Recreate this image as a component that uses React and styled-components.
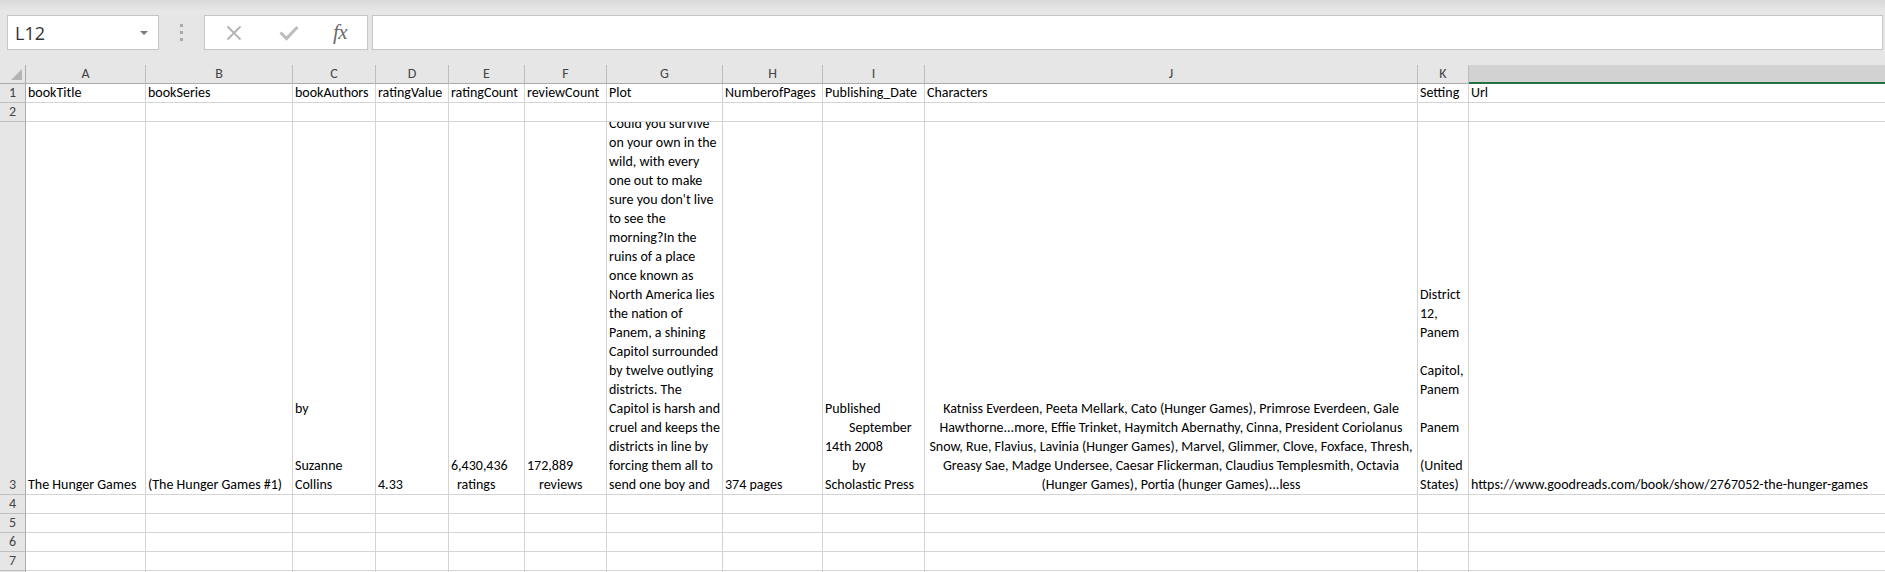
import React from "react";
import styled, { createGlobalStyle } from "styled-components";

const GlobalStyle = createGlobalStyle`
  html, body { margin: 0; padding: 0; background: #e6e6e6; overflow: hidden; }
  * { box-sizing: border-box; }
`;

const CELL_FONT = `Carlito, Calibri, "Liberation Sans", sans-serif`;

const Window = styled.div`
  width: 1885px;
  height: 572px;
  overflow: hidden;
  background: #e6e6e6;
  display: flex;
  flex-direction: column;
`;

const FormulaBar = styled.div`
  height: 65px;
  flex: none;
  display: flex;
  padding: 15px 2px 15px 7px;
  background: linear-gradient(to bottom, #d9d9d9 0px, #e8e8e8 12px, #e6e6e6 15px);
`;

const NameBox = styled.div`
  width: 152px;
  height: 35px;
  background: #fff;
  border: 1px solid #c6c6c6;
  display: flex;
  align-items: center;
  justify-content: space-between;
  padding: 0 10px 0 7px;
  font-family: "Open Sans", "Noto Sans", sans-serif;
  font-size: 18px;
  color: #333;
`;

const Caret = styled.span`
  width: 0;
  height: 0;
  border-left: 4px solid transparent;
  border-right: 4px solid transparent;
  border-top: 4px solid #7b7b7b;
`;

const Grip = styled.div`
  width: 45px;
  display: flex;
  flex-direction: column;
  align-items: center;
  justify-content: center;
  gap: 4px;
`;

const Dot = styled.span`
  width: 3px;
  height: 3px;
  background: #a9a9a9;
`;

const FxBox = styled.div`
  width: 164px;
  height: 35px;
  background: #fff;
  border: 1px solid #c6c6c6;
  display: flex;
  align-items: center;
  padding-left: 20px;
`;

const FxButton = styled.span`
  width: ${(p) => p.$w}px;
  display: flex;
  align-items: center;
  justify-content: center;
`;

const FxLabel = styled.span`
  font-family: "Liberation Serif", "DejaVu Serif", serif;
  font-style: italic;
  font-size: 21px;
  color: #6a6a6a;
  letter-spacing: -0.5px;
  margin-left: -2px;
`;

const FormulaInput = styled.div`
  flex: 1;
  height: 35px;
  margin-left: 4px;
  background: #fff;
  border: 1px solid #c6c6c6;
`;

const Sheet = styled.div`
  display: grid;
  grid-template-columns: ${(p) => p.$cols};
  grid-template-rows: ${(p) => p.$rows};
  background: #fff;
  font-family: ${CELL_FONT};
  font-size: 14px;
  color: #000;
`;

const Corner = styled.div`
  background: #e6e6e6;
  border-right: 1px solid #ababab;
  border-bottom: 1px solid #ababab;
  display: flex;
  align-items: flex-end;
  justify-content: flex-end;
  padding: 0 3px 3px 0;
`;

const ColHeader = styled.div`
  background: ${(p) => (p.$selected ? "#d2d2d2" : "#e6e6e6")};
  border-right: 1px solid ${(p) => (p.$last ? "transparent" : "#bdbdbd")};
  border-bottom: ${(p) => (p.$selected ? "2px solid #217346" : "1px solid #ababab")};
  color: ${(p) => (p.$selected ? "#1f5b3b" : "#444")};
  text-align: center;
  line-height: 18px;
`;

const RowHeader = styled.div`
  background: #e6e6e6;
  border-right: 1px solid #ababab;
  border-bottom: 1px solid #c0c0c0;
  color: #444;
  display: flex;
  align-items: flex-end;
  justify-content: center;
  line-height: 18px;
`;

const Cell = styled.div`
  border-right: 1px solid #d4d4d4;
  border-bottom: 1px solid #d4d4d4;
  padding: 0 2px;
  line-height: 18px;
  white-space: nowrap;
  display: flex;
  flex-direction: column;
  justify-content: flex-end;
  align-items: ${(p) => (p.$align === "center" ? "center" : "flex-start")};
`;

const TallCell = styled(Cell)`
  overflow: hidden;
  line-height: 19px;
`;

const Line = styled.div`
  white-space: pre;
  min-height: 19px;
  padding-left: ${(p) => p.$indent || 0}px;
  text-align: ${(p) => (p.$align === "center" ? "center" : "left")};
`;

const columns = [
  { key: "A", w: 120, head: "bookTitle" },
  { key: "B", w: 147, head: "bookSeries" },
  { key: "C", w: 83, head: "bookAuthors" },
  { key: "D", w: 73, head: "ratingValue" },
  { key: "E", w: 76, head: "ratingCount" },
  { key: "F", w: 82, head: "reviewCount" },
  { key: "G", w: 116, head: "Plot" },
  { key: "H", w: 100, head: "NumberofPages" },
  { key: "I", w: 102, head: "Publishing_Date" },
  { key: "J", w: 493, head: "Characters" },
  { key: "K", w: 51, head: "Setting" },
  { key: "L", w: 1000, head: "Url" },
];

const plot = [
  "Could you survive",
  "on your own in the",
  "wild, with every",
  "one out to make",
  "sure you don't live",
  "to see the",
  "morning?In the",
  "ruins of a place",
  "once known as",
  "North America lies",
  "the nation of",
  "Panem, a shining",
  "Capitol surrounded",
  "by twelve outlying",
  "districts. The",
  "Capitol is harsh and",
  "cruel and keeps the",
  "districts in line by",
  "forcing them all to",
  "send one boy and",
];

const row3 = {
  A: { lines: [["The Hunger Games"]] },
  B: { lines: [["(The Hunger Games #1)"]] },
  C: { lines: [["by"], [""], [""], ["Suzanne"], ["Collins"]] },
  D: { lines: [["4.33"]] },
  E: { lines: [["6,430,436"], ["ratings", 6]] },
  F: { lines: [["172,889"], ["reviews", 12]] },
  G: { lines: plot.map((t) => [t]) },
  H: { lines: [["374 pages"]] },
  I: {
    lines: [["Published"], ["September", 24], ["14th 2008"], ["by", 27], ["Scholastic Press"]],
  },
  J: {
    align: "center",
    lines: [
      ["Katniss Everdeen, Peeta Mellark, Cato (Hunger Games), Primrose Everdeen, Gale"],
      ["Hawthorne...more, Effie Trinket, Haymitch Abernathy, Cinna, President Coriolanus"],
      ["Snow, Rue, Flavius, Lavinia (Hunger Games), Marvel, Glimmer, Clove, Foxface, Thresh,"],
      ["Greasy Sae, Madge Undersee, Caesar Flickerman, Claudius Templesmith, Octavia"],
      ["(Hunger Games), Portia (hunger Games)...less"],
    ],
  },
  K: {
    lines: [
      ["District"], ["12,"], ["Panem"], [""], ["Capitol,"], ["Panem"], [""], ["Panem"], [""], ["(United"], ["States)"],
    ],
  },
  L: { lines: [["https://www.goodreads.com/book/show/2767052-the-hunger-games"]] },
};

const XIcon = () => (
  <svg width="16" height="16" viewBox="0 0 16 16">
    <path d="M1.5 1.5 L14.5 14.5 M14.5 1.5 L1.5 14.5" stroke="#b3b3b3" strokeWidth="1.8" fill="none" />
  </svg>
);

const CheckIcon = () => (
  <svg width="20" height="16" viewBox="0 0 20 16">
    <path d="M1.5 7.5 L7.5 13.5 L18.5 2" stroke="#bdbdbd" strokeWidth="3" fill="none" />
  </svg>
);

const CornerTriangle = () => (
  <svg width="11" height="11" viewBox="0 0 11 11">
    <polygon points="11,0 11,11 0,11" fill="#b4b4b4" />
  </svg>
);

export default function App() {
  const cols = "26px " + columns.map((c) => c.w + "px").join(" ");
  const rows = "19px 19px 19px 373px 19px 19px 19px 19px 19px";
  const blankRows = [4, 5, 6, 7];

  return (
    <>
      <GlobalStyle />
      <Window>
        <FormulaBar>
          <NameBox>
            <span>L12</span>
            <Caret />
          </NameBox>
          <Grip>
            <Dot />
            <Dot />
            <Dot />
          </Grip>
          <FxBox>
            <FxButton $w={18}>
              <XIcon />
            </FxButton>
            <FxButton $w={92}>
              <CheckIcon />
            </FxButton>
            <FxLabel>fx</FxLabel>
          </FxBox>
          <FormulaInput />
        </FormulaBar>

        <Sheet $cols={cols} $rows={rows}>
          <Corner>
            <CornerTriangle />
          </Corner>
          {columns.map((c, i) => (
            <ColHeader key={c.key} $selected={c.key === "L"} $last={i === columns.length - 1}>
              {c.key}
            </ColHeader>
          ))}

          <RowHeader>1</RowHeader>
          {columns.map((c) => (
            <Cell key={c.key}>{c.head}</Cell>
          ))}

          <RowHeader>2</RowHeader>
          {columns.map((c) => (
            <Cell key={c.key} />
          ))}

          <RowHeader>3</RowHeader>
          {columns.map((c) => {
            const d = row3[c.key];
            return (
              <TallCell key={c.key} $align={d.align}>
                {d.lines.map(([t, indent], i) => (
                  <Line key={i} $indent={indent} $align={d.align}>
                    {t}
                  </Line>
                ))}
              </TallCell>
            );
          })}

          {blankRows.map((r) => (
            <React.Fragment key={r}>
              <RowHeader>{r}</RowHeader>
              {columns.map((c) => (
                <Cell key={c.key} />
              ))}
            </React.Fragment>
          ))}

          <RowHeader />
          {columns.map((c) => (
            <Cell key={c.key} />
          ))}
        </Sheet>
      </Window>
    </>
  );
}
